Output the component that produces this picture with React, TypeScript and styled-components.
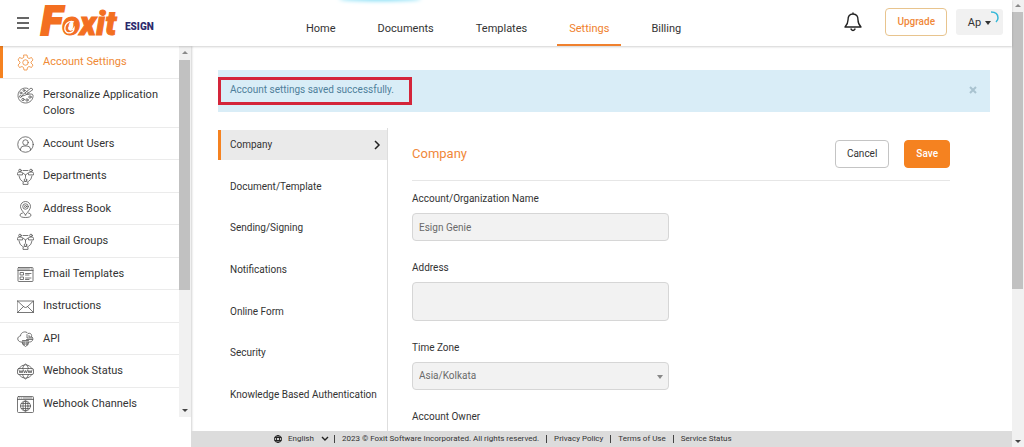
import React from 'react';
import styled, { createGlobalStyle, css } from 'styled-components';

const Global = createGlobalStyle`
  *, *::before, *::after { box-sizing: border-box; }
  html, body, #root { height: 100%; }
  body { margin: 0; overflow: hidden; background: #fff; color: #333; font-family: Roboto, "Liberation Sans", sans-serif; font-size: 10px; line-height: 16px; }
  button, input, select, textarea { font: inherit; color: inherit; margin: 0; }
  a { color: inherit; text-decoration: none; }
  h1, ul { margin: 0; padding: 0; list-style: none; font-weight: 400; }
`;

const Shell = styled.div`
  display: flex;
  height: 100vh;
`;

const Page = styled.div`
  flex: 1;
  min-width: 0;
  display: flex;
  flex-direction: column;
`;

const Header = styled.header`
  position: relative;
  z-index: 2;
  display: flex;
  align-items: center;
  height: 46px;
  flex: none;
  padding: 0 9px 0 16px;
  background: #fff;
  box-shadow: 0 1px 2px rgba(0, 0, 0, 0.18);
`;

const LoadGlow = styled.span`
  position: absolute;
  top: -3px;
  left: 340px;
  width: 80px;
  height: 3px;
  border-radius: 50%;
  box-shadow: 0 0 4px 1px #7fdcf5;
`;

const IconButton = styled.button`
  display: flex;
  padding: 0;
  border: 0;
  background: none;
`;

const Brand = styled.a`
  display: flex;
  align-items: center;
  position: relative;
  flex: none;
  margin-left: 11px;
  width: 253px;
  height: 46px;
`;

const Wordmark = styled.span`
  flex: none;
  width: 84px;
  font-size: 33px;
  line-height: 46px;
  font-weight: 900;
  font-style: italic;
  color: #f36f21;
  -webkit-text-stroke: 1px #f36f21;
`;

const Initial = styled.span`
  font-size: 40px;
  -webkit-text-stroke: 2px #f36f21;
`;

const Swirl = styled.svg`
  position: absolute;
  left: 19px;
  top: 17px;
`;

const Product = styled.span`
  font-size: 10px;
  font-weight: 900;
  line-height: 12px;
  color: #2b2a6c;
  padding-top: 8px;
`;

const TopNav = styled.nav`
  display: flex;
  align-self: stretch;
  gap: 18px;
`;

const TopLink = styled.a<{ $active?: boolean }>`
  display: flex;
  align-items: center;
  padding: 14px 12px 0;
  font-size: 11px;
  border-bottom: 2px solid ${(p) => (p.$active ? '#f0812e' : 'transparent')};
  ${(p) => p.$active && css`color: #f0812e;`}
`;

const HeaderTools = styled.div`
  display: flex;
  align-items: center;
  margin-left: auto;
  padding-bottom: 2px;
`;

const BellButton = styled(IconButton)`
  margin-right: 23px;
`;

const Button = styled.button<{ $kind?: 'primary' | 'outline' }>`
  height: 28px;
  padding: 0 11px;
  border-radius: 4px;
  border: 1px solid #c4c4c4;
  background: #fff;
  ${(p) => p.$kind === 'primary' && css`background: #f58220; border-color: #f58220; color: #fff; font-weight: 500;`}
  ${(p) => p.$kind === 'outline' && css`border-color: #e8c48e; color: #f0883a; font-weight: 500;`}
`;

const UserButton = styled.button`
  position: relative;
  display: flex;
  align-items: center;
  justify-content: center;
  gap: 4px;
  width: 47px;
  height: 26px;
  margin-left: 9px;
  padding: 2px 0 0;
  border: 0;
  border-radius: 3px;
  background: #f1f1f1;
  font-size: 11px;
`;

const Spinner = styled.svg`
  position: absolute;
  right: 3px;
  top: 1px;
`;

const Body = styled.div`
  flex: 1;
  min-height: 0;
  display: flex;
`;

const Sidebar = styled.aside`
  display: flex;
  flex: none;
  width: 191px;
  padding-bottom: 30px;
  box-shadow: 1px 0 2px rgba(0, 0, 0, 0.18);
`;

const SideScroll = styled.nav`
  flex: 1;
  overflow: hidden;
`;

const SideList = styled.ul`
  display: grid;
  grid-template-rows: 33px 49px repeat(9, 1fr);
  min-height: 374px;
`;

const SideItem = styled.li<{ $active?: boolean }>`
  display: flex;
  border-bottom: 1px solid #ebebeb;
  ${(p) => p.$active && css`
    color: #ef8a35;
    box-shadow: inset 3px 0 #f58220;
  `}
`;

const SideLink = styled.a<{ $active?: boolean }>`
  display: flex;
  flex: 1;
  gap: 9px;
  padding: 8px 12px 0 17px;
  font-size: 11px;
  line-height: 16px;
  svg { flex: none; color: ${(p) => (p.$active ? 'inherit' : '#555')}; }
`;

const Track = styled.div`
  display: flex;
  flex-direction: column;
  justify-content: space-between;
  flex: none;
  width: 12px;
  background: #f1f1f1;
`;

const Arrow = styled.svg`
  display: block;
  flex: none;
`;

const Thumb = styled.div<{ $share: number }>`
  flex: 0 0 ${(p) => p.$share}%;
  width: 11px;
  background: #c1c1c1;
  margin-bottom: auto;
`;

const Content = styled.div`
  flex: 1;
  min-width: 0;
  display: flex;
  flex-direction: column;
`;

const Main = styled.main`
  flex: 1;
  min-height: 0;
  overflow: hidden;
  padding: 24px 22px 0 27px;
`;

const Alert = styled.div`
  position: relative;
  display: flex;
  justify-content: space-between;
  height: 42px;
  padding: 12px;
  background: #d9edf7;
  color: #4f7f9b;
`;

const Highlight = styled.span`
  position: absolute;
  left: 0;
  top: 7px;
  width: 194px;
  height: 28px;
  border: 3px solid #d4253a;
`;

const Columns = styled.div`
  display: flex;
  margin-top: 16px;
`;

const SubNav = styled.nav`
  flex: none;
  width: 170px;
  min-height: 320px;
  padding-top: 2px;
  border-right: 1px solid #dedede;
`;

const SubList = styled.ul`
  display: flex;
  flex-direction: column;
  justify-content: space-between;
  min-height: 280px;
`;

const SubLink = styled.a<{ $active?: boolean }>`
  display: flex;
  align-items: center;
  justify-content: space-between;
  height: 30px;
  padding: 0 6px 0 9px;
  border-left: 3px solid ${(p) => (p.$active ? '#f58220' : 'transparent')};
  background: ${(p) => (p.$active ? '#eaeaea' : 'none')};
`;

const Form = styled.form`
  flex: 1;
  padding: 12px 40px 0 24px;
`;

const FormHead = styled.div`
  display: flex;
  align-items: center;
  gap: 15px;
  padding-bottom: 12px;
  border-bottom: 1px solid #e6e6e6;
  margin-bottom: 10px;
`;

const Title = styled.h1`
  flex: 1;
  font-size: 13px;
  color: #f0883a;
`;

const Field = styled.div`
  display: flex;
  flex-direction: column;
  gap: 6px;
  width: 257px;
  margin-bottom: 19px;
`;

const control = css`
  width: 100%;
  height: 28px;
  padding: 0 6px;
  border: 1px solid #d6d6d6;
  border-radius: 4px;
  background: #f2f2f2;
  color: #6a6a6a;
`;

const Input = styled.input`${control}`;
const TextArea = styled.textarea`
  ${control}
  display: block;
  height: 39px;
  resize: none;
`;
const Select = styled.select`
  ${control}
  appearance: none;
`;

const SelectWrap = styled.div`
  position: relative;
  svg { position: absolute; right: 6px; top: 13px; }
`;

const Footer = styled.footer`
  display: flex;
  align-items: center;
  flex: none;
  height: 16px;
  padding-left: 83px;
  background: #dcdcdc;
  font-size: 8px;
  line-height: 16px;
  white-space: nowrap;
`;

const FootItem = styled.span`
  padding: 0 7px;
  line-height: 8px;
  border-left: 1px solid #444;
`;

const Language = styled.label`
  display: flex;
  align-items: center;
  gap: 6px;
  padding-right: 5px;
  select { appearance: none; border: 0; padding: 0; background: none; width: 27px; }
`;

const Icon = ({ children }: { children: React.ReactNode }) => (
  <svg width="17" height="17" viewBox="0 0 34 34" fill="none" stroke="currentColor" strokeWidth="1.6" strokeLinejoin="round" strokeLinecap="round" aria-hidden="true">
    {children}
  </svg>
);

const Person = ({ x, y }: { x: number; y: number }) => (
  <g transform={`translate(${x} ${y})`}>
    <circle cx="5" cy="3" r="2.6" />
    <path d="M0 11V9q0-3 3-3h4q3 0 3 3v2z" />
  </g>
);

const groupIcon = (
  <Icon>
    <Person x={1} y={2} />
    <Person x={23} y={2} />
    <Person x={12} y={21} />
    <path d="M12 5h10M12 10l5 4 5-4M4 16q1 8 7 11M30 16q-1 8-7 11M17 14v5" />
  </Icon>
);

const items: { label: string; icon: React.ReactNode }[] = [
  {
    label: 'Account Settings',
    icon: (
      <Icon>
        <path d="M14 2h6l1 5 3 2 5-2 3 5-4 4v2l4 4-3 5-5-2-3 2-1 5h-6l-1-5-3-2-5 2-3-5 4-4v-2l-4-4 3-5 5 2 3-2z" />
        <circle cx="17" cy="17" r="5.5" />
      </Icon>
    ),
  },
  {
    label: 'Personalize Application Colors',
    icon: (
      <Icon>
        <path d="M22 3C12-1 2 7 2 17c0 9 7 15 15 15 9 0 16-7 15-16-1-3-6-2-10-1-4 0-6-1-5-3" />
        <path d="M12 15L28 2l4 3-15 11-6 2zM20 9l4 4" />
        <circle cx="8" cy="12" r="2" /><circle cx="7" cy="19" r="2" /><circle cx="12" cy="25" r="2.4" /><circle cx="20" cy="26" r="2.4" /><circle cx="26" cy="20" r="2.4" /><circle cx="14" cy="7" r="2" />
      </Icon>
    ),
  },
  {
    label: 'Account Users',
    icon: (
      <Icon>
        <circle cx="17" cy="17" r="15.5" />
        <circle cx="17" cy="13" r="5.5" />
        <path d="M7 28v-2q1-6 7-6h6q6 0 7 6v2" />
      </Icon>
    ),
  },
  { label: 'Departments', icon: groupIcon },
  {
    label: 'Address Book',
    icon: (
      <Icon>
        <path d="M17 28C11 20 7 16 7 11a10 10 0 0 1 20 0c0 5-4 9-10 17z" />
        <circle cx="17" cy="11" r="5.5" />
        <circle cx="17" cy="11" r="2" />
        <path d="M11 24q-5 1-5 4 0 5 11 5t11-5q0-3-5-4" />
      </Icon>
    ),
  },
  { label: 'Email Groups', icon: groupIcon },
  {
    label: 'Email Templates',
    icon: (
      <Icon>
        <rect x="2" y="3" width="30" height="28" rx="1.5" />
        <path d="M2 9h30M5 6h20M28 6h1M17 15h11M17 18h7M17 24h11M17 27h7" />
        <rect x="7" y="13" width="6" height="5" /><rect x="7" y="22" width="6" height="5" />
      </Icon>
    ),
  },
  {
    label: 'Instructions',
    icon: (
      <Icon>
        <rect x="1" y="6" width="32" height="23" />
        <path d="M1 6l13 12q3 2 6 0L33 6M1 29l12-12M33 29L21 17" />
      </Icon>
    ),
  },
  {
    label: 'API',
    icon: (
      <Icon>
        <path d="M11 22H8c-8-1-9-11-1-12 0-8 11-11 15-5 6-2 8 3 7 6 5 3 3 11-4 11h-2" />
        <path d="M20 7v7h10M24 9v3h5M19 17h12" />
        <path d="M11 19h12M11 22h12l-1 5-5 4-5-4zM14 22v6M20 22v6M12 26h10" />
      </Icon>
    ),
  },
  {
    label: 'Webhook Status',
    icon: (
      <Icon>
        <path d="M4 11a15 15 0 0 1 26 0M4 23a15 15 0 0 0 26 0" />
        <path d="M11 11q2-8 6-9 4 1 6 9M11 23q2 8 6 9 4-1 6-9" />
        <rect x="1" y="11" width="32" height="12" rx="3" />
        <path d="M4 14l2 6 2-5 2 5 2-6M13 14l2 6 2-5 2 5 2-6M22 14l2 6 2-5 2 5 2-6" />
      </Icon>
    ),
  },
  {
    label: 'Webhook Channels',
    icon: (
      <Icon>
        <rect x="1" y="1" width="32" height="32" rx="2" />
        <path d="M1 7h32M4 4h1M8 4h1M12 4h18" />
        <circle cx="17" cy="20" r="10" />
        <ellipse cx="17" cy="20" rx="5" ry="10" />
        <path d="M7 20h20M17 10v20M9 15h16M9 25h16" />
      </Icon>
    ),
  },
];

const Scrollbar = ({ share, end }: { share: number; end: number }) => (
  <Track aria-hidden="true">
    <Arrow width="12" height={end} viewBox="0 0 12 12"><path d="M3 7l3-3 3 3z" fill="#8a8a8a" /></Arrow>
    <Thumb $share={share} />
    <Arrow width="12" height={end} viewBox="0 0 12 12"><path d="M3 5l3 3 3-3z" fill="#444" /></Arrow>
  </Track>
);

const topLinks = ['Home', 'Documents', 'Templates', 'Settings', 'Billing'];
const sections = ['Company', 'Document/Template', 'Sending/Signing', 'Notifications', 'Online Form', 'Security', 'Knowledge Based Authentication'];

export default function App() {
  return (
    <Shell>
      <Global />
      <Page>
        <Header>
          <LoadGlow />
          <IconButton aria-label="Menu">
            <svg width="14" height="14" stroke="#666" strokeWidth="2"><path d="M1 2h12M1 7h12M1 12h12" /></svg>
          </IconButton>
          <Brand href="#" aria-label="Foxit eSign">
            <Wordmark><Initial>F</Initial>oxit</Wordmark>
            <Swirl width="18" height="20" viewBox="0 0 18 20" fill="none" stroke="#fff" aria-hidden="true">
              <path d="M14 5C9 3 4 7 5 13c2 5 9 3 9-2-2 3-6 3-5-1" strokeWidth="1.3" />
            </Swirl>
            <Product>ESIGN</Product>
          </Brand>
          <TopNav aria-label="Primary">
            {topLinks.map((t) => <TopLink key={t} href="#" $active={t === 'Settings'}>{t}</TopLink>)}
          </TopNav>
          <HeaderTools>
            <BellButton aria-label="Notifications">
              <svg width="18" height="20" viewBox="0 0 18 20" fill="none" stroke="#222" strokeWidth="1.4" strokeLinecap="round" strokeLinejoin="round">
                <path d="M9 1v1M9 2c-4 0-5 3-5 6 0 4-1 5-3 7h16c-2-2-3-3-3-7 0-3-1-6-5-6zM7 17q2 3 4 0" />
              </svg>
            </BellButton>
            <Button $kind="outline">Upgrade</Button>
            <UserButton>
              Ap
              <svg width="6" height="4" aria-hidden="true"><path d="M0 0h6L3 4z" fill="#333" /></svg>
              <Spinner width="10" height="13" fill="none" stroke="#35b8d8" strokeWidth="1.5" aria-hidden="true"><path d="M1 2q7 0 7 6 0 2-2 4" /></Spinner>
            </UserButton>
          </HeaderTools>
        </Header>
        <Body>
          <Sidebar>
            <SideScroll aria-label="Settings">
              <SideList>
                {items.map((it, i) => (
                  <SideItem key={it.label} $active={i === 0}>
                    <SideLink href="#" $active={i === 0}>{it.icon}<span>{it.label}</span></SideLink>
                  </SideItem>
                ))}
              </SideList>
            </SideScroll>
            <Scrollbar share={62} end={14} />
          </Sidebar>
          <Content>
            <Main>
              <Alert role="status">
                Account settings saved successfully.
                <IconButton aria-label="Close">
                  <svg width="10" height="16" stroke="#a9c3d0" strokeWidth="2"><path d="M2 5l6 6M8 5l-6 6" /></svg>
                </IconButton>
                <Highlight />
              </Alert>
              <Columns>
                <SubNav aria-label="Account settings sections">
                  <SubList>
                    {sections.map((s, i) => (
                      <li key={s}>
                        <SubLink href="#" $active={i === 0}>
                          {s}
                          {i === 0 && <svg width="7" height="10" fill="none" stroke="#222" strokeWidth="1.5" aria-hidden="true"><path d="M1 1l4 4-4 4" /></svg>}
                        </SubLink>
                      </li>
                    ))}
                  </SubList>
                </SubNav>
                <Form>
                  <FormHead>
                    <Title>Company</Title>
                    <Button type="button">Cancel</Button>
                    <Button type="button" $kind="primary">Save</Button>
                  </FormHead>
                  <Field>
                    <label htmlFor="org">Account/Organization Name</label>
                    <Input id="org" defaultValue="Esign Genie" />
                  </Field>
                  <Field>
                    <label htmlFor="address">Address</label>
                    <TextArea id="address" />
                  </Field>
                  <Field>
                    <label htmlFor="zone">Time Zone</label>
                    <SelectWrap>
                      <Select id="zone"><option>Asia/Kolkata</option></Select>
                      <svg width="6" height="4" aria-hidden="true"><path d="M0 0h6L3 4z" fill="#888" /></svg>
                    </SelectWrap>
                  </Field>
                  <Field>
                    <label htmlFor="owner">Account Owner</label>
                    <Input id="owner" />
                  </Field>
                </Form>
              </Columns>
            </Main>
            <Footer>
              <Language>
                <svg width="8" height="8" viewBox="0 0 16 16" fill="none" stroke="#222" strokeWidth="2" aria-hidden="true">
                  <circle cx="8" cy="8" r="7" /><ellipse cx="8" cy="8" rx="3" ry="7" /><path d="M1 5h14M1 11h14" />
                </svg>
                <select aria-label="Language"><option>English</option></select>
                <svg width="8" height="6" fill="none" stroke="#222" strokeWidth="1.4" aria-hidden="true"><path d="M1 1l3 3 3-3" /></svg>
              </Language>
              <FootItem>2023 © Foxit Software Incorporated. All rights reserved.</FootItem>
              <FootItem as="a" href="#">Privacy Policy</FootItem>
              <FootItem as="a" href="#">Terms of Use</FootItem>
              <FootItem as="a" href="#">Service Status</FootItem>
            </Footer>
          </Content>
        </Body>
      </Page>
      <Scrollbar share={62} end={12} />
    </Shell>
  );
}
